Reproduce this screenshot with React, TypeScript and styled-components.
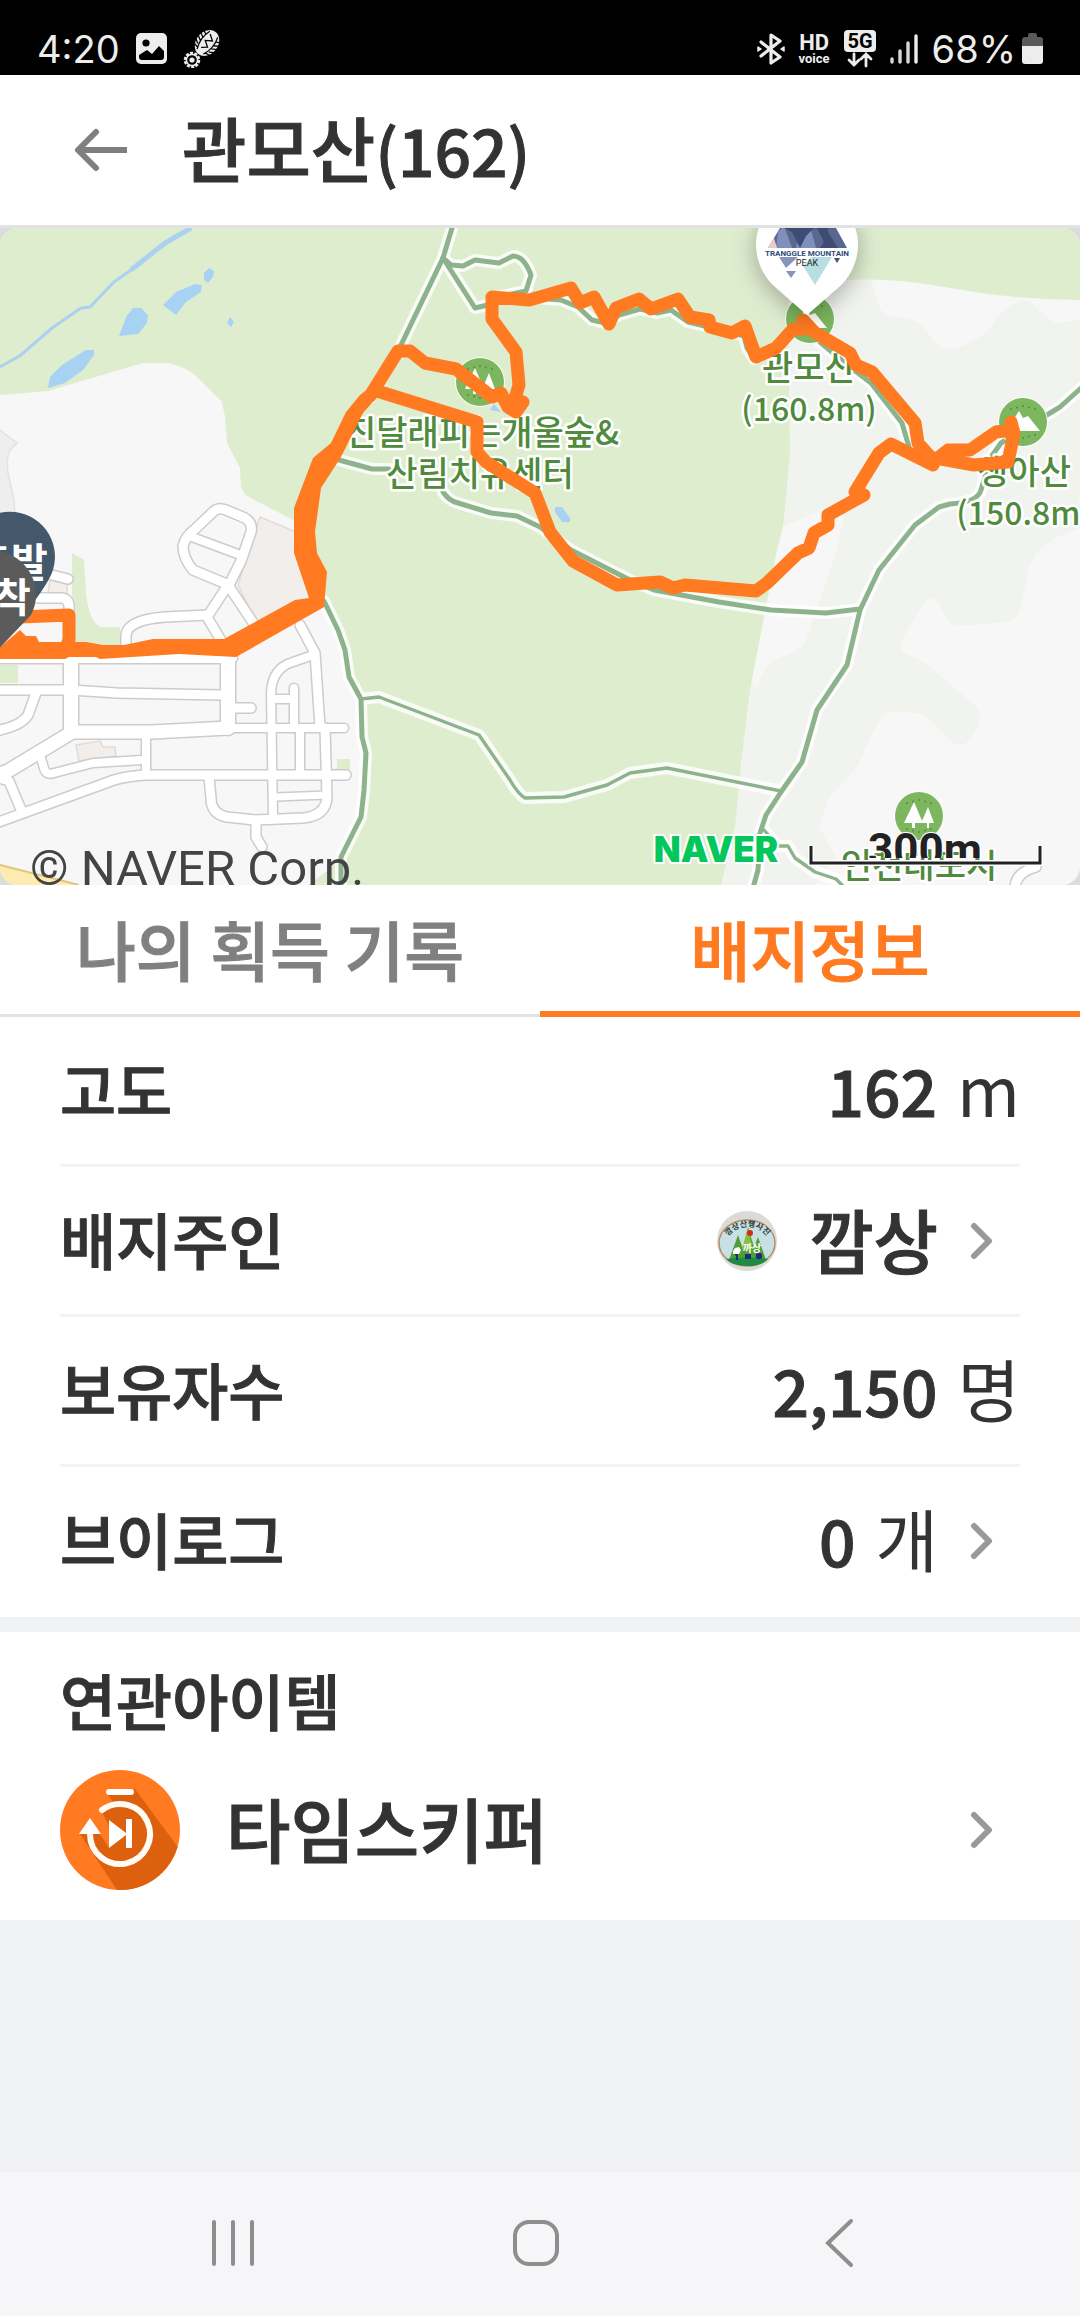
import React from 'react';
import styled, { createGlobalStyle, css } from 'styled-components';

const sans = `'Noto Sans CJK KR', 'Noto Sans', sans-serif`;
const ink = '#333333';
const orange = '#ff7a20';

const GlobalStyle = createGlobalStyle`
  *, *::before, *::after { box-sizing: border-box; }
  body { margin: 0; background: #f0f2f4; font-family: ${sans}; color: ${ink}; }
  h1, h2, p, ul { margin: 0; padding: 0; }
  ul { list-style: none; }
  button { border: 0; padding: 0; margin: 0; background: none; color: inherit; font: inherit; cursor: pointer; }
  svg { display: block; flex: none; }
`;

const semibold = css`
  font-weight: 500;
  -webkit-text-stroke: 1px currentColor;
`;

const Screen = styled.div`
  display: flex;
  flex-direction: column;
  min-height: 100vh;
`;

const StatusBar = styled.div`
  display: flex;
  align-items: center;
  justify-content: space-between;
  height: 75px;
  padding: 22px 37px 0;
  background: #000;
  color: #ededed;
`;

const StatusGroup = styled.div<{ $gap: number }>`
  display: flex;
  align-items: center;
  gap: ${p => p.$gap}px;
`;

const StatusText = styled.span`
  font: 400 38px/52px Inter, Roboto, sans-serif;
`;

const VoiceBadge = styled.span`
  display: flex;
  flex-direction: column;
  align-items: center;
  font-family: Roboto, sans-serif;
  font-weight: 700;
`;

const VoiceTop = styled.span`
  font-size: 22px;
  line-height: 20px;
`;

const VoiceBottom = styled.span`
  font-size: 13px;
  line-height: 12px;
`;

const Header = styled.header`
  display: flex;
  align-items: center;
  gap: 50px;
  height: 153px;
  padding-left: 72px;
  background: #fff;
  border-bottom: 3px solid #e2e2e2;
`;

const Title = styled.h1`
  padding-bottom: 4px;
  font-size: 70px;
  line-height: 96px;
  ${semibold}
`;

const Digits = styled.span`
  font-size: 64px;
  line-height: 96px;
  ${semibold}
`;

const MapFrame = styled.section`
  background: #dcdcdc;
`;

const MapSvg = styled.svg`
  width: 100%;
  height: auto;
  border-radius: 18px;
`;

const Tabs = styled.div`
  display: grid;
  grid-template-columns: 1fr 1fr;
  background: #fff;
`;

const Tab = styled.button<{ $active?: boolean }>`
  height: 132px;
  padding-bottom: 4px;
  font-size: 65px;
  line-height: 96px;
  ${semibold}
  color: #808080;
  border-bottom: 3px solid #e2e2e2;
  ${p => p.$active && css`
    padding-bottom: 1px;
    color: ${orange};
    border-bottom: 6px solid ${orange};
  `}
`;

const Panel = styled.section`
  background: #fff;
  padding: 0 60px;
`;

const rowBase = css`
  display: flex;
  align-items: center;
  justify-content: space-between;
  width: 100%;
  text-align: left;
`;

const Item = styled.li`
  border-bottom: 3px solid #f1f3f4;
  height: 150px;
  &:last-child { border-bottom: 0; }
`;

const Row = styled.div`
  ${rowBase}
  height: 147px;
`;

const RowButton = styled.button`
  && { ${rowBase} height: 147px; padding-right: 26px; }
`;

const Label = styled.span`
  padding-bottom: 4px;
  font-size: 61px;
  line-height: 96px;
  ${semibold}
`;

const Value = styled.span`
  display: flex;
  align-items: center;
  gap: 32px;
`;

const Name = styled.span`
  padding-bottom: 4px;
  font-size: 70px;
  line-height: 96px;
  ${semibold}
`;

const Amount = styled.span`
  display: flex;
  align-items: baseline;
  gap: 20px;
  padding-bottom: 4px;
`;

const Unit = styled.span`
  font-size: 68px;
  line-height: 96px;
  font-weight: 400;
`;

const Related = styled(Panel)`
  margin-top: 15px;
  padding: 20px 60px 30px;
`;

const RelatedTitle = styled.h2`
  font-size: 61px;
  line-height: 96px;
  ${semibold}
`;

const RelatedButton = styled.button`
  && {
    ${rowBase}
    margin-top: 22px;
    padding-right: 26px;
  }
`;

const RelatedName = styled.span`
  display: flex;
  align-items: center;
  gap: 46px;
`;

const Spacer = styled.div`
  flex: 1;
`;

const NavBar = styled.nav`
  display: grid;
  grid-template-columns: repeat(3, 1fr);
  height: 144px;
  padding: 0 90px 2px 82px;
  background: #f6f6f8;
`;

const NavButton = styled.button`
  display: flex;
  align-items: center;
  justify-content: center;
`;

const Chevron = () => (
  <svg width="24" height="40" viewBox="0 0 24 40" fill="none" stroke="#999" strokeWidth="6" strokeLinecap="round" strokeLinejoin="round" aria-hidden="true">
    <path d="M4 5 L19 20 L4 35" />
  </svg>
);

const ImageIcon = () => (
  <svg width="31" height="31" viewBox="0 0 31 31" aria-hidden="true">
    <rect width="31" height="31" rx="5" fill="#ededed" />
    <circle cx="10" cy="10" r="3.6" fill="#000" />
    <path d="M3 22 L11 17 L16 21 L23 13 L28 18 V24 Q28 27 25 27 H6 Q3 27 3 24 Z" fill="#000" />
  </svg>
);

const ShoeIcon = () => (
  <svg width="38" height="38" viewBox="0 0 38 38" fill="none" aria-hidden="true">
    <g transform="rotate(38 24 13)">
      <ellipse cx="24" cy="13" rx="11" ry="14" fill="#ededed" />
      <path d="M12 4 L18 7 M12 8 L17 11 M12 12 L17 15 M12 16 L17 19 M14 21 L19 22 M36 4 L30 7 M36 8 L31 11 M36 12 L31 15 M36 16 L31 19 M34 21 L29 22 M19 2 Q15 13 20 24 M29 2 Q33 13 28 24 M21 4 L27 8 L21 12 L27 16 L22 20" stroke="#000" strokeWidth="1.3" />
    </g>
    <circle cx="9" cy="30" r="7" stroke="#ededed" strokeWidth="2.6" strokeDasharray="3 1.4" />
    <circle cx="9" cy="30" r="5.6" stroke="#ededed" strokeWidth="1.6" />
    <circle cx="9" cy="30" r="2.6" fill="#ededed" />
  </svg>
);

const BluetoothIcon = () => (
  <svg width="28" height="32" viewBox="0 0 28 32" fill="none" stroke="#ededed" strokeWidth="3.2" strokeLinecap="round" strokeLinejoin="round" aria-hidden="true">
    <path d="M4 9 L23 24 L14 30 V2 L23 8 L4 23" />
    <path d="M1 14 L4 16 L1 18 Z M27 14 L24 16 L27 18 Z" strokeWidth="1.5" fill="#ededed" />
  </svg>
);

const FiveGIcon = () => (
  <svg width="32" height="38" viewBox="0 0 32 38" aria-hidden="true">
    <rect width="32" height="22" rx="4" fill="#ededed" />
    <text x="16" y="18" textAnchor="middle" fontFamily="Roboto, sans-serif" fontWeight="700" fontSize="20" fill="#000">5G</text>
    <path d="M10 24 V35 M5 30 L10 35 L15 30 M22 36 V24 M17 29 L22 24 L27 29" fill="none" stroke="#ededed" strokeWidth="2.8" strokeLinecap="round" />
  </svg>
);

const SignalIcon = () => (
  <svg width="28" height="30" viewBox="0 0 28 30" stroke="#ededed" strokeWidth="3.4" strokeLinecap="round" aria-hidden="true">
    <path d="M2 25 V28 M10 17 V28 M18 9 V28" stroke="#d8d8d8" />
    <path d="M26 2 V28" />
  </svg>
);

const BatteryIcon = () => (
  <svg width="21" height="31" viewBox="0 0 21 31" aria-hidden="true">
    <path d="M6 2 Q6 0 8 0 H13 Q15 0 15 2 V4 H18 Q21 4 21 7 V13 H0 V7 Q0 4 3 4 H6 Z" fill="#5a5a5a" />
    <path d="M0 13 H21 V28 Q21 31 18 31 H3 Q0 31 0 28 Z" fill="#ededed" />
  </svg>
);

const BackArrow = () => (
  <svg width="60" height="48" viewBox="0 0 60 48" fill="none" stroke="#7f7f7f" strokeWidth="6" strokeLinecap="round" strokeLinejoin="round" aria-hidden="true">
    <path d="M24 6 L6 24 L24 42" />
    <path d="M6 24 H55" strokeLinecap="butt" />
  </svg>
);

const Avatar = () => (
  <svg width="60" height="60" viewBox="0 0 60 60" role="img" aria-label="깜상">
    <defs>
      <clipPath id="badge"><circle cx="30" cy="31" r="27" /></clipPath>
      <path id="badgeArc" d="M9 30 A 22 18 0 0 1 52 30" />
    </defs>
    <circle cx="30" cy="30" r="30" fill="#d9dbd6" />
    <ellipse cx="30" cy="32" rx="28" ry="23" fill="#c6e0e4" stroke="#b98a63" strokeWidth="1.4" />
    <g clipPath="url(#badge)">
      <path d="M12 49 L21 24 L26 38 L31 16 L37 36 L41 26 L49 49 Z" fill="#4f9f35" />
      <path d="M25 38 L31 17 L36 38 Z" fill="#86bf3e" />
      <path d="M8 48 Q30 45 52 48 Q44 55 30 55 Q16 55 8 48 Z" fill="#1f8a44" />
      <path d="M18 37 L22 36 L24 39 L22 43 H16 V40 Z" fill="#fff" />
      <path d="M17 43 H21 V49 H19 V45 Z M28 43 H34 V48 H28 Z" fill="#1d2c7a" />
      <circle cx="42" cy="45" r="3.2" fill="#1d2c7a" />
    </g>
    <circle cx="33" cy="22" r="3" fill="#d8291c" />
    <text x="35" y="41" textAnchor="middle" fontFamily={sans} fontWeight="700" fontSize="10" fill="#fff" style={{ WebkitTextStroke: 0 }}>까상</text>
    <text fontFamily={sans} fontWeight="700" fontSize="8" fill="#2d3c3c">
      <textPath href="#badgeArc" startOffset="50%" textAnchor="middle">깜상산행사진</textPath>
    </text>
  </svg>
);

const TimeSkipperIcon = () => (
  <svg width="120" height="120" viewBox="0 0 120 120" fill="none" aria-hidden="true">
    <defs><clipPath id="skip"><circle cx="60" cy="60" r="60" /></clipPath></defs>
    <circle cx="60" cy="60" r="60" fill={orange} />
    <path clipPath="url(#skip)" fill="#dc600d" d="M75 19 L120 80 V120 H57 L20 64 H40 L49 78 V56 L41 40 L55 34 L48 25 Z" />
    <path d="M49 22 H71" stroke="#fff" strokeWidth="6" strokeLinecap="round" />
    <path d="M42 40 A30 30 0 1 1 30 64" stroke="#fffaf3" strokeWidth="6" strokeLinecap="round" />
    <path d="M30 48 L41 64 H19 Z M49 50 L66 63 V49 H72 V78 H66 V65 L49 78 Z" fill="#fff" />
  </svg>
);

const streets: Array<[string, number]> = [
  ['M0 430 H232', 10],
  ['M71 430 V502', 14],
  ['M228 430 V500', 14],
  ['M0 462 H71 L117 465 L222 467', 9],
  ['M71 504 H152 L228 500', 13],
  ['M228 500 H344', 8],
  ['M74 503 L8 543 L-6 548', 13],
  ['M36 465 L28 487 Q22 497 0 502', 9],
  ['M146 506 V546', 8],
  ['M40 527 L44 540 Q46 548 54 545 L93 535 L142 532', 8],
  ['M-4 595 L114 552 Q128 548 145 547 L346 547', 9],
  ['M-4 549 L9 553 L22 584', 9],
  ['M273 590 L271 465 Q272 440 293 434 L313 427', 8],
  ['M300 397 L315 425 L320 499', 9],
  ['M325 500 L327 569 Q326 588 303 590 L255 592 L227 589 Q211 586 211 570 L209 549', 9],
  ['M294 460 V500', 8],
  ['M300 502 V547', 8],
  ['M272 471 H293', 8],
  ['M276 569 L326 567', 7],
  ['M256 592 V609 L262 619', 9],
  ['M234 480 H251', 9],
  ['M228 357 L256 399', 9],
  ['M228 357 L207 389 L222 414', 9],
  ['M208 387 L165 389 Q126 392 126 408 V420', 9],
  ['M229 357 L193 342 Q183 330 183 318 Q186 308 193 303 L214 283 Q219 279 226 282 L245 290 Q253 295 251 304 L241 333 Z', 9],
  ['M192 309 L243 328', 8],
  ['M44 345 L68 351', 9],
  ['M38 370 H62 Q70 371 69 382', 9],
  ['M1015 662 Q1014 645 1036 639', 9],
];

const trails = [
  'M452 0 L443 30 L400 119 L370 170',
  'M443 30 L451 37 L463 38 L475 32 L499 35 L513 28 Q524 28 531 47 L526 63 L492 70',
  'M443 30 L475 80 L492 76',
  'M536 70 L561 72 L578 79 L592 92 L605 95 L619 87 L640 81 L657 85 L671 82 L688 94 L709 99 L733 105 L744 108 L747 120 L754 131 L778 120',
  'M808 104 L833 125 L850 139 L871 155 L902 195 L909 219',
  'M339 232 L372 241 H389 M443 264 Q449 273 458 275 L491 285 L517 288 L540 299 L571 322 L630 352 L654 362 L719 374 L771 382 L826 385 L860 381',
  'M1090 152 L1060 179 L1001 215 L991 229 L981 262 Q978 274 950 276 L939 279 L915 297 L879 342 L860 382 L847 437 L817 482 L802 534 L781 564 L766 587 L760 605 L758 642 L753 660',
  'M324 373 L338 402 L345 422 L349 449 L361 471 L362 509 L366 525 L364 562 L361 589 L341 629 V660',
];

const thinTrails = [
  'M361 471 L379 469 L479 507 L510 552 Q518 566 525 570 L564 569 L607 557 L630 545 L667 540 L781 563',
  'M764 602 L778 618 H788 L795 630 L815 644 L836 651 L845 660',
];

const routeLoop =
  'M370 168 L398 123 H410 L425 135 L456 141 L492 169 L501 165 L508 179 L516 184 L523 174 L514 174 L519 157 L516 124 L492 91 V69 L529 72 L540 69 L571 60 L580 75 L594 69 L609 96 L616 80 L639 71 L651 81 L678 71 L690 89 L709 92 L710 99 L732 105 L745 98 L756 129 L776 120 L793 101 H805 L803 92 L814 104 L850 125 L856 137 L872 144 L915 195 L918 215 L934 233 L948 222 H970 L996 204 L1011 202 V194 L1014 205 L1008 234 L974 237 L936 230 L933 237 L891 216 L879 225 L855 264 L864 267 L828 287 V297 L814 305 L809 320 L798 325 L767 355 L756 363 L685 357 L673 360 L660 354 L617 357 L573 333 L550 304 L535 265 L486 234 L477 224 V194 L377 163';

const ParkMark = ({ x, y, peak }: { x: number; y: number; peak?: boolean }) => (
  <g transform={`translate(${x} ${y})`}>
    <circle r="25" fill="#fff" opacity=".9" />
    <circle r="24" fill="#7cb75f" />
    {[-12, -6, 0, 6, 12].map(dx => (
      <g key={dx} fill="#528c3e">
        <circle cx={dx} cy={-16 + Math.abs(dx) / 4} r="1" />
        <circle cx={dx} cy={16 - Math.abs(dx) / 4} r="1" />
      </g>
    ))}
    {peak ? (
      <path d="M-17 9 L-4 -11 L3 1 L0 -4 L5 -6 L17 9 Z" fill="#fff" />
    ) : (
      <path d="M-5 -14 L4 7 H-4 V12 H-7 V7 H-15 Z M9 -9 L15 7 H10 V12 H8 V7 H4 L3 5 Z" fill="#fff" />
    )}
  </g>
);

const Halo = styled.text<{ $small?: boolean }>`
  font-family: ${sans};
  font-weight: 500;
  font-size: ${p => (p.$small ? 32 : 34)}px;
  fill: #4f8a3d;
  stroke: #ffffff;
  stroke-width: 5px;
  stroke-linejoin: round;
  paint-order: stroke;
  text-anchor: middle;
`;

const TrailMap = () => (
  <MapSvg viewBox="0 0 1080 657" role="img" aria-label="관모산 지도">
    <defs>
      <clipPath id="scaleClip"><rect x="850" y="590" width="150" height="40" /></clipPath>
      <filter id="pinShadow" x="-50%" y="-50%" width="200%" height="200%">
        <feDropShadow dx="0" dy="6" stdDeviation="12" floodColor="#000" floodOpacity=".3" />
      </filter>
    </defs>
    <rect width="1080" height="657" fill="#f7f7f7" />
    <path fill="#f0f3ee" d="M780 50 H870 L879 79 Q885 90 905 90 Q922 92 930 108 Q938 122 952 121 Q985 112 995 92 Q1010 72 1030 73 Q1045 90 1055 95 L1080 92 V300 L1057 309 L1036 325 L1029 339 L1020 382 Q1016 392 1005 394 L958 398 Q950 398 946 388 L938 375 Q931 366 924 375 L900 415 Q900 422 906 426 L926 435 L975 478 Q984 486 978 500 L967 514 Q959 521 950 512 L925 488 Q915 483 888 484 Q882 486 874 502 L857 539 L829 569 L819 599 L836 629 L815 657 H700 V300 Z" />
    <path fill="#f7f7f7" d="M777 301 L822 282 H838 Q845 284 842 296 L836 325 L815 385 L805 415 Q800 423 774 432 Q764 437 758 460 L740 450 Z" />
    <path fill="#dfedcf" d="M0 0 H1080 V72 Q1030 72 981 65 L919 55 Q880 50 847 52 L800 52 Q788 60 788 80 L790 225 L783 299 L777 322 L764 389 L750 462 L741 535 L735 599 L721 657 H308 L331 640 L363 589 L365 522 L361 472 L348 439 L344 412 L327 372 L293 292 L245 267 L241 259 L240 240 L227 215 L225 189 L222 174 L195 147 Q183 138 169 135 H143 L48 163 L0 167 Z" />
    <path fill="#eeeeee" stroke="#e2e2e2" strokeWidth="1.5" d="M-3 200 L17 215 L10 222 Q6 230 8 245 L14 272 L16 300 H-3 Z" />
    <path fill="#dfedcf" d="M72 325 L84 332 L86 365 Q90 399 103 399 H120 V419 H72 Z M0 437 H18 V455 H0 Z M337 531 H350 V542 H337 Z" />
    <g fill="#f2eeeb" stroke="#e4dbd6" strokeWidth="1.5">
      <path d="M260 289 L296 304 L310 372 L257 396 L238 357 L248 325 Z" />
      <path d="M76 517 L100 513 L103 519 H115 L116 528 L79 533 Z" />
      <path d="M50 352 L67 356 V366 H48 Z" />
    </g>
    <path d="M191 0 L165 15 L131 42 L114 54 L90 79 L81 80 L52 100 L21 127 L0 139" fill="none" stroke="#aad2ee" strokeWidth="3" />
    <path d="M191 0 L165 15 L131 42" fill="none" stroke="#aad2ee" strokeWidth="5" />
    <g fill="#a8d2f3">
      <path d="M48 160 L50 149 L62 137 L86 122 H94 V127 L83 142 L65 155 Z" />
      <path d="M119 108 L126 89 L133 80 L141 80 L148 87 L147 95 L138 106 Z" />
      <path d="M163 77 L176 64 L195 56 L202 57 L201 64 L186 74 L176 87 Z" />
      <path d="M204 52 V45 L209 40 L214 43 L213 49 L208 55 Z" />
      <path d="M227 95 L230 89 L234 94 L231 99 Z" />
      <path d="M555 279 H562 L570 290 V294 H562 L555 284 Z" />
      <path d="M490 182 L494 176 L501 184 Z" />
    </g>
    <path d="M0 637 L79 657 H0 Z" fill="#fdebb0" />
    <path d="M0 637 L79 657" stroke="#e3c47c" strokeWidth="2" />
    <g fill="none" strokeLinecap="round" strokeLinejoin="round">
      {streets.map(([d, w]) => <path key={d} d={d} stroke="#cccccc" strokeWidth={w + 3} />)}
      {streets.map(([d, w]) => <path key={d} d={d} stroke="#ffffff" strokeWidth={w} />)}
      {[...trails, ...thinTrails].map(d => <path key={d} d={d} stroke="#ffffff" strokeWidth="12" opacity=".8" />)}
      {trails.map(d => <path key={d} d={d} stroke="#8db38c" strokeWidth="5" />)}
      {thinTrails.map(d => <path key={d} d={d} stroke="#8db38c" strokeWidth="3.4" />)}
    </g>

    <ParkMark x={480} y={154} />
    <ParkMark x={919} y={588} />
    <ParkMark x={810} y={91} peak />
    <ParkMark x={1023} y={194} peak />

    <Halo x="482" y="217">진달래피는개울숲&amp;</Halo>
    <Halo x="480" y="258">산림치유센터</Halo>
    <Halo x="809" y="152">관모산</Halo>
    <Halo x="809" y="193" $small>(160.8m)</Halo>
    <Halo x="1024" y="256">생아산</Halo>
    <Halo x="1024" y="297" $small>(150.8m)</Halo>
    <Halo x="919" y="650">인천대도시</Halo>

    <g fill="none" stroke={orange} strokeWidth="13" strokeLinecap="round" strokeLinejoin="round">
      <path d={routeLoop} />
      <path d="M20 389 L69 387 V412 L65 422" />
    </g>
    <path fill={orange} d="M0 419 L20 402 L26 408 H36 L39 414 H86 L103 417 H124 L153 411 H224 L295 372 L309 370 L294 325 V280 L313 230 L331 215 L346 184 L360 167 L365 163 L378 168 L363 185 L341 229 L321 260 L315 304 L317 325 L327 344 L324 379 L236 429 L179 426 L100 431 L96 429 H69 L65 431 H0 Z" />

    <path d="M-35 331 A45 45 0 1 1 49 351 Q36 374 9 404 Z" fill="#44586c" />
    <text x="11" y="349" textAnchor="middle" fontFamily={sans} fontWeight="700" fontSize="40" fill="#fff">출발</text>
    <path d="M-52 366 A44 44 0 1 1 31 387 L-8 428 Z" fill="#5b5b5b" />
    <text x="-6" y="384" textAnchor="middle" fontFamily={sans} fontWeight="700" fontSize="40" fill="#fff">도착</text>

    <g filter="url(#pinShadow)">
      <path d="M756 17 A51 51 0 0 1 858 17 Q857 40 842 56 L807 87 L772 56 Q757 40 756 17 Z" fill="#fff" />
    </g>
    <path d="M768 20 L780 0 H836 L847 20 Z" fill="#59688f" />
    <path d="M778 4 L784 -2 L792 20 H776 Z M800 4 L810 -2 L816 20 H796 Z" fill="#7f90bd" />
    <path d="M784 0 L792 4 L800 20 L806 8 L816 -2 L824 14 L820 20 H838 L828 4 V0 Z" fill="#3f4b72" />
    <path d="M768 20 L774 10 L777 20 Z" fill="#f0c9c9" />
    <path d="M779 29 H798 L786 40 Z M786 43 H796 L791 50 Z" fill="#8793bd" />
    <path d="M803 38 L812 29 H832 L815 57 Z" fill="#b7dfe2" />
    <path d="M834 30 H840 L837 35 Z" fill="#3e5378" />
    <text x="807" y="28" textAnchor="middle" fontFamily="Roboto, sans-serif" fontWeight="700" fontSize="8" fill="#2d4a7c">TRANGGLE MOUNTAIN</text>
    <text x="807" y="38" textAnchor="middle" fontFamily="Roboto, sans-serif" fontSize="9" fill="#222">PEAK</text>

    <text x="30" y="657" fontFamily="Roboto, sans-serif" fontSize="49" fill="#444">© NAVER Corp.</text>
    <text x="716" y="634" textAnchor="middle" fontFamily="Inter, sans-serif" fontWeight="900" fontSize="35" fill="#03c75a" stroke="#fff" strokeWidth="4" paintOrder="stroke">NAVER</text>
    <g clipPath="url(#scaleClip)">
      <text x="925" y="637" textAnchor="middle" fontFamily="Roboto, sans-serif" fontWeight="700" fontSize="44" fill="#222225" stroke="#fff" strokeWidth="2" paintOrder="stroke">300m</text>
    </g>
    <path d="M811 618 V635 H1040 V618" fill="none" stroke="#fff" strokeWidth="6" />
    <path d="M811 618 V635 H1040 V618" fill="none" stroke="#222225" strokeWidth="3" />
  </MapSvg>
);

export default function App() {
  return (
    <Screen>
      <GlobalStyle />
      <StatusBar>
        <StatusGroup $gap={16}>
          <StatusText>4:20</StatusText>
          <ImageIcon />
          <ShoeIcon />
        </StatusGroup>
        <StatusGroup $gap={14}>
          <BluetoothIcon />
          <VoiceBadge>
            <VoiceTop>HD</VoiceTop>
            <VoiceBottom>voice</VoiceBottom>
          </VoiceBadge>
          <FiveGIcon />
          <SignalIcon />
          <StatusGroup $gap={6}>
            <StatusText>68%</StatusText>
            <BatteryIcon />
          </StatusGroup>
        </StatusGroup>
      </StatusBar>

      <Header>
        <button type="button" aria-label="뒤로"><BackArrow /></button>
        <Title>관모산<Digits>(162)</Digits></Title>
      </Header>

      <MapFrame><TrailMap /></MapFrame>

      <Tabs role="tablist">
        <Tab type="button" role="tab" aria-selected={false}>나의 획득 기록</Tab>
        <Tab type="button" role="tab" aria-selected $active>배지정보</Tab>
      </Tabs>

      <Panel>
        <ul>
          <Item>
            <Row>
              <Label>고도</Label>
              <Amount><Digits>162</Digits><Unit>m</Unit></Amount>
            </Row>
          </Item>
          <Item>
            <RowButton type="button">
              <Label>배지주인</Label>
              <Value><Avatar /><Name>깜상</Name><Chevron /></Value>
            </RowButton>
          </Item>
          <Item>
            <Row>
              <Label>보유자수</Label>
              <Amount><Digits>2,150</Digits><Unit>명</Unit></Amount>
            </Row>
          </Item>
          <Item>
            <RowButton type="button">
              <Label>브이로그</Label>
              <Value>
                <Amount><Digits>0</Digits><Unit>개</Unit></Amount>
                <Chevron />
              </Value>
            </RowButton>
          </Item>
        </ul>
      </Panel>

      <Related>
        <RelatedTitle>연관아이템</RelatedTitle>
        <RelatedButton type="button">
          <RelatedName><TimeSkipperIcon /><Name>타임스키퍼</Name></RelatedName>
          <Chevron />
        </RelatedButton>
      </Related>

      <Spacer />

      <NavBar>
        <NavButton type="button" aria-label="최근 앱">
          <svg width="44" height="48" viewBox="0 0 44 48" stroke="#8e8e8e" strokeWidth="4" strokeLinecap="round"><path d="M3 3 V45 M22 3 V45 M41 3 V45" /></svg>
        </NavButton>
        <NavButton type="button" aria-label="홈">
          <svg width="48" height="48" viewBox="0 0 48 48" fill="none" stroke="#8e8e8e" strokeWidth="4"><rect x="3" y="3" width="42" height="42" rx="14" /></svg>
        </NavButton>
        <NavButton type="button" aria-label="뒤로 가기">
          <svg width="30" height="50" viewBox="0 0 30 50" fill="none" stroke="#8e8e8e" strokeWidth="4" strokeLinecap="round"><path d="M27 3 L4 25 L27 47" /></svg>
        </NavButton>
      </NavBar>
    </Screen>
  );
}
